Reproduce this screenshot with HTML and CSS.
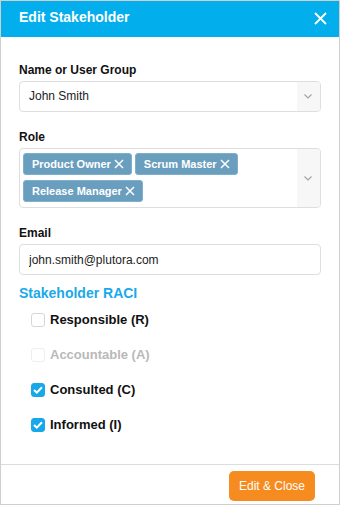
FILE: index.html
```html
<!DOCTYPE html>
<html lang="en">
<head>
    <meta charset="UTF-8">
    <meta name="viewport" content="width=device-width, initial-scale=1.0">
    <title>Edit Stakeholder</title>
    <link rel="stylesheet" href="styles.css">
</head>
<body>

    <div class="modal">
        <div class="modal-header">
            <h2>Edit Stakeholder</h2>
            <svg class="close" width="13" height="13" viewBox="0 0 13 13">
                <path d="M1 1 L12 12 M12 1 L1 12" stroke="#fff" stroke-width="1.8" fill="none"/>
            </svg>
        </div>

        <div class="modal-body">
            <div class="field">
                <label class="field-label">Name or User Group</label>
                <div class="select-box">
                    <div class="select-value">John Smith</div>
                    <div class="select-arrow">
                        <svg width="8" height="5" viewBox="0 0 8 5"><path d="M0.5 0.5 L4 4 L7.5 0.5" stroke="#a5a5a5" stroke-width="1.2" fill="none"/></svg>
                    </div>
                </div>
            </div>

            <div class="field">
                <label class="field-label">Role</label>
                <div class="select-box multi">
                    <div class="tags">
                        <span class="tag">Product Owner <svg width="10" height="10" viewBox="0 0 10 10"><path d="M1 1 L9 9 M9 1 L1 9" stroke="#fff" stroke-width="1.5"/></svg></span>
                        <span class="tag">Scrum Master <svg width="10" height="10" viewBox="0 0 10 10"><path d="M1 1 L9 9 M9 1 L1 9" stroke="#fff" stroke-width="1.5"/></svg></span>
                        <span class="tag">Release Manager <svg width="10" height="10" viewBox="0 0 10 10"><path d="M1 1 L9 9 M9 1 L1 9" stroke="#fff" stroke-width="1.5"/></svg></span>
                    </div>
                    <div class="select-arrow">
                        <svg width="8" height="5" viewBox="0 0 8 5"><path d="M0.5 0.5 L4 4 L7.5 0.5" stroke="#a5a5a5" stroke-width="1.2" fill="none"/></svg>
                    </div>
                </div>
            </div>

            <div class="field">
                <label class="field-label">Email</label>
                <input type="text" class="text-input" value="john.smith@plutora.com">
            </div>

            <h3 class="raci-title">Stakeholder RACI</h3>

            <div class="raci-list">
                <div class="check-row">
                    <span class="check"></span>
                    <span>Responsible (R)</span>
                </div>
                <div class="check-row disabled">
                    <span class="check"></span>
                    <span>Accountable (A)</span>
                </div>
                <div class="check-row">
                    <span class="check checked"><svg width="10" height="8" viewBox="0 0 10 8"><path d="M1 4 L3.8 6.6 L9 1.2" stroke="#fff" stroke-width="2" fill="none"/></svg></span>
                    <span>Consulted (C)</span>
                </div>
                <div class="check-row">
                    <span class="check checked"><svg width="10" height="8" viewBox="0 0 10 8"><path d="M1 4 L3.8 6.6 L9 1.2" stroke="#fff" stroke-width="2" fill="none"/></svg></span>
                    <span>Informed (I)</span>
                </div>
            </div>
        </div>

        <div class="modal-footer">
            <button class="btn-save">Edit &amp; Close</button>
        </div>
    </div>

</body>
</html>
```

FILE: styles.css
```css
* {
    box-sizing: border-box;
}

body {
    margin: 0;
    font-family: 'Liberation Sans', Arial, sans-serif;
    background-color: #fff;
}

.modal {
    width: 340px;
    height: 505px;
    border: 1px solid #cfcfcf;
    display: flex;
    flex-direction: column;
    background: #fff;
}

.modal-header {
    height: 36px;
    background-color: #03aeed;
    display: flex;
    justify-content: space-between;
    align-items: flex-start;
    padding: 8px 12px 0 18px;
}

.modal-header h2 {
    margin: 0;
    color: white;
    font-size: 14px;
    line-height: 16px;
    font-weight: bold;
}

.close {
    margin-top: 3px;
}

.modal-body {
    padding: 26px 18px 0 18px;
    flex: 1;
}

.field {
    margin-bottom: 18px;
}

.field-label {
    display: block;
    font-size: 12px;
    line-height: 14px;
    font-weight: bold;
    color: #111;
    margin-bottom: 4px;
}

.select-box {
    display: flex;
    height: 31px;
    border: 1px solid #dedede;
    border-radius: 4px;
    overflow: hidden;
}

.select-value {
    flex: 1;
    font-size: 12px;
    line-height: 29px;
    padding-left: 9px;
    color: #222;
}

.select-arrow {
    width: 23px;
    background-color: #f7f7f7;
    display: flex;
    align-items: center;
    justify-content: center;
    padding-right: 1px;
}

.select-box.multi {
    height: 60px;
}

.tags {
    flex: 1;
    display: flex;
    flex-wrap: wrap;
    align-content: flex-start;
    gap: 5px 3px;
    padding: 4px 3px;
}

.tag {
    display: inline-flex;
    align-items: center;
    gap: 3px;
    height: 22px;
    padding: 0 7px 0 8px;
    background-color: #6a9ebe;
    border: 1px solid #7eb0cc;
    border-radius: 3px;
    color: white;
    font-size: 11px;
    font-weight: bold;
}

.text-input {
    display: block;
    width: 100%;
    height: 31px;
    border: 1px solid #dedede;
    border-radius: 4px;
    padding: 0 9px;
    font-family: inherit;
    font-size: 12px;
    color: #222;
    outline: none;
}

.raci-title {
    margin: -8px 0 1px 0;
    font-size: 14px;
    line-height: 16px;
    color: #1aa9e9;
}

.raci-list {
    padding-left: 12px;
}

.check-row {
    display: flex;
    align-items: center;
    gap: 5px;
    height: 35px;
    font-size: 13px;
    font-weight: bold;
    color: #111;
}

.check {
    width: 14px;
    height: 14px;
    border: 1px solid #d6d6d6;
    border-radius: 3px;
    display: flex;
    align-items: center;
    justify-content: center;
}

.check.checked {
    background-color: #17a8ea;
    border-color: #17a8ea;
}

.check-row.disabled {
    color: #b9b9b9;
}

.check-row.disabled .check {
    border-color: #eeeeee;
}

.modal-footer {
    border-top: 1px solid #dcdcdc;
    height: 40px;
    display: flex;
    justify-content: flex-end;
    align-items: flex-start;
    padding: 6px 24px 0 0;
}

.btn-save {
    height: 30px;
    padding: 0 10px;
    background-color: #f68b1f;
    color: white;
    border: none;
    border-radius: 5px;
    font-family: inherit;
    font-size: 12px;
    cursor: pointer;
}
```
